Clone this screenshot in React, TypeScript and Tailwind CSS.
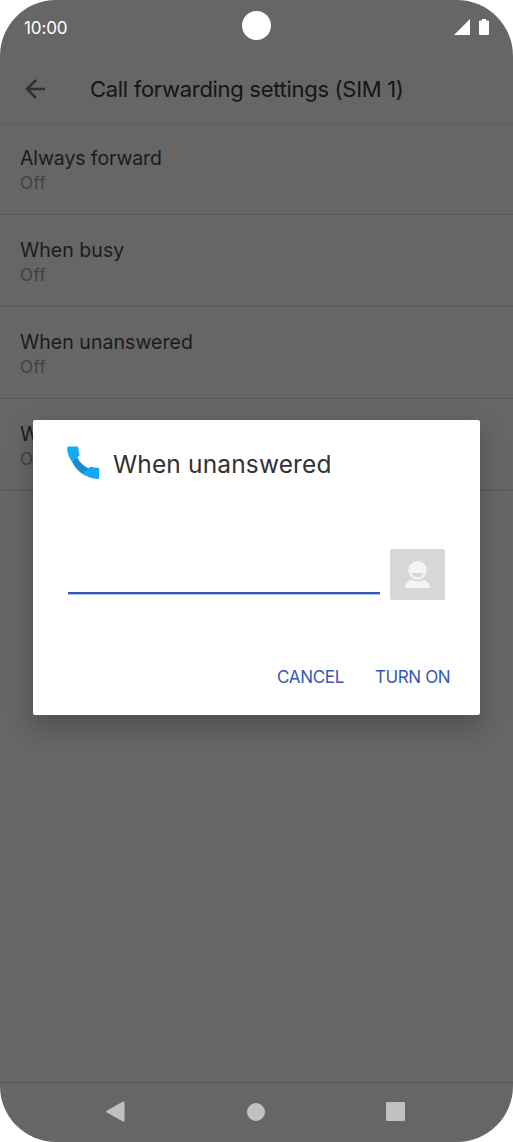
import React from "react";

const settings = [
  { title: "Always forward", tracking: "tracking-[-0.1px]" },
  { title: "When busy", tracking: "tracking-[0.05px]" },
  { title: "When unanswered", tracking: "tracking-[0.05px]" },
  { title: "When unreachable", tracking: "tracking-[0.05px]" },
];

function StatusBar() {
  return (
    <header className="relative flex h-[54px] shrink-0 items-center justify-between pl-6 pr-6 text-white">
      <span className="pt-px text-[17px] leading-6 tracking-[-0.1px]">10:00</span>
      <div className="absolute left-[242px] top-[11px] size-[29px] rounded-full bg-white" />
      <div className="flex items-center gap-[9px]">
        <svg width="16" height="16" viewBox="0 0 16 16" fill="white"><path d="M0 16 16 0v16z" /></svg>
        <svg width="10" height="16" viewBox="0 0 10 16" fill="white"><path d="M3 0h4v1.500h2q1 0 1 1V15q0 1-1 1H1q-1 0-1-1V2.500q0-1 1-1h2z" /></svg>
      </div>
    </header>
  );
}

function Dialog() {
  return (
    <section className="absolute left-[33px] top-[420px] flex h-[295px] w-[447px] flex-col rounded-[2px] bg-white shadow-[0_11px_25px_3px_rgba(0,0,0,0.2)]">
      <div className="flex h-[88px] items-center pl-[34px]">
        <svg width="33" height="33" viewBox="0 0 33 33" className="mb-[3px]">
          <path d="M4.500 14 10 11Q13.500 18.500 22 22.800L18.500 29.500Q8.500 25 4.500 14z" fill="#168bd0" />
          <path d="M1.500.5H10q1.200 0 1.300 1.200.2 3.500 1.100 6.300.3 1.200-.6 2L5.400 16.500Q.2 9 .1 2 .1.500 1.500.5z" fill="#13a9f4" />
          <path d="M16 28 22.500 21.300q.8-.8 2-.5 3 .9 6.500 1 1.200.1 1.200 1.200v8.500q0 1.400-1.400 1.400-8.500-.2-14.800-4.900z" fill="#13a9f4" />
        </svg>
        <h2 className="ml-[13px] whitespace-nowrap pb-px text-[24.5px] font-normal leading-8 tracking-[0.15px] text-[#333]">When unanswered</h2>
      </div>
      <div className="flex h-[92px] items-end pl-[35px]">
        <div className="mb-[6px] h-[2px] w-[312px] bg-[#3558b4] shadow-[0_1px_0_#b5c5e8]" />
        <div className="ml-[10px] flex h-[51px] w-[55px] items-center justify-center rounded-[2px] bg-[#d6d8d7]">
          <svg width="27" height="28" viewBox="0 0 27 28" fill="none">
            <path d="M.7 27C1.500 21.500 5 18.700 9 18.500h9c4 .2 7.500 3 8.300 8.500z" fill="#f4f4f4" />
            <circle cx="13.500" cy="9.300" r="11.100" fill="#d6d8d7" />
            <circle cx="13.500" cy="9.300" r="9.200" fill="#f4f4f4" />
            <path d="M7.500 12h12Q18 16.200 13.500 16.200T7.500 12z" fill="#d6d8d7" />
          </svg>
        </div>
      </div>
      <div className="flex flex-1 items-start justify-end pr-[29px] pt-[65px] text-[17px] leading-6 text-[#3558b4]">
        <button className="mr-[30px] w-[68px] whitespace-nowrap text-left tracking-[-0.3px]">CANCEL</button>
        <button className="w-[76px] whitespace-nowrap text-left tracking-[-0.4px]">TURN ON</button>
      </div>
    </section>
  );
}

export default function App() {
  return (
    <div className="h-[1142px] w-[513px] bg-white font-['Inter',sans-serif]">
      <main className="relative flex h-full flex-col overflow-hidden rounded-[56px] bg-[#666]">
        <StatusBar />
        <div className="flex h-[69px] shrink-0 items-center pl-[25px]">
          <svg width="21" height="20" viewBox="0 0 21 20" fill="none" stroke="#303030" strokeWidth="2.500"><path d="M20 10H2M11 1 2 10l9 9" /></svg>
          <h1 className="ml-[44px] mt-px whitespace-nowrap text-[22px] font-normal leading-8 tracking-[-0.3px] text-[#151515]">Call forwarding settings (SIM 1)</h1>
        </div>
        <ul className="border-t border-[#5e5e5e]">
          {settings.map(({ title, tracking }, index) => (
            <li key={title} className={`flex flex-col border-b border-[#595959] pl-5 ${index === 0 ? "h-[91px] pt-[22px]" : "h-[92px] pt-[23px]"}`}>
              <span className={`text-[19.5px] leading-[25px] text-[#1b1b1b] ${tracking}`}>{title}</span>
              <span className="text-[17px] leading-6 tracking-[0.4px] text-[#404040]">Off</span>
            </li>
          ))}
        </ul>
        <nav className="mt-auto flex h-[60px] shrink-0 items-center justify-between border-t border-[#555] pb-0.5 pl-[106px] pr-[108px]">
          <svg width="19" height="21" viewBox="0 0 19 21" fill="#c0c0c0"><path d="M17 .5 1 9.500q-1.500 1 0 2L17 20.500q1.500.5 1.500-1V1.500Q18.500 0 17 .5z" /></svg>
          <div className="size-[18px] rounded-full bg-[#c0c0c0]" />
          <div className="size-[19px] rounded-[1px] bg-[#c0c0c0]" />
        </nav>
        <Dialog />
      </main>
    </div>
  );
}
